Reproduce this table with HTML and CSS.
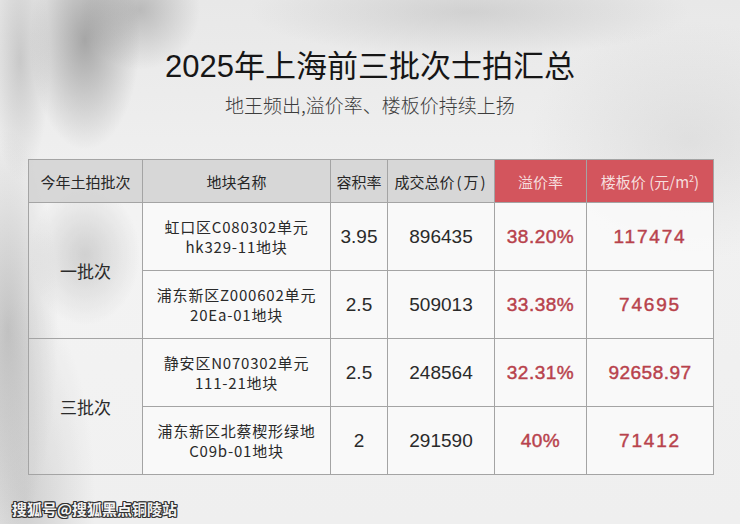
FILE: index.html
```html
<!DOCTYPE html>
<html lang="zh-CN">
<head>
<meta charset="utf-8">
<title>2025年上海前三批次土拍汇总</title>
<link rel="stylesheet" href="styles.css">
</head>
<body>
<div class="page">
  <h1 class="title">2025年上海前三批次士拍汇总</h1>
  <p class="subtitle">地王频出,溢价率、楼板价持续上扬</p>
  <table class="grid">
    <colgroup>
      <col class="c1"><col class="c2"><col class="c3"><col class="c4"><col class="c5"><col class="c6">
    </colgroup>
    <thead>
      <tr class="head">
        <th>今年土拍批次</th>
        <th>地块名称</th>
        <th>容积率</th>
        <th>成交总价<span class="paren">(</span>万<span class="paren">)</span></th>
        <th class="hot">溢价率</th>
        <th class="hot">楼板价 (元/m<sup>2</sup>)</th>
      </tr>
    </thead>
    <tbody>
      <tr>
        <td class="batch" rowspan="2">一批次</td>
        <td class="name">虹口区C080302单元<br>hk329-11地块</td>
        <td class="num">3.95</td>
        <td class="num">896435</td>
        <td class="red">38.20%</td>
        <td class="red wide">117474</td>
      </tr>
      <tr>
        <td class="name">浦东新区Z000602单元<br>20Ea-01地块</td>
        <td class="num">2.5</td>
        <td class="num">509013</td>
        <td class="red">33.38%</td>
        <td class="red wide">74695</td>
      </tr>
      <tr>
        <td class="batch" rowspan="2">三批次</td>
        <td class="name">静安区N070302单元<br>111-21地块</td>
        <td class="num">2.5</td>
        <td class="num">248564</td>
        <td class="red">32.31%</td>
        <td class="red">92658.97</td>
      </tr>
      <tr>
        <td class="name">浦东新区北蔡楔形绿地<br>C09b-01地块</td>
        <td class="num">2</td>
        <td class="num">291590</td>
        <td class="red">40%</td>
        <td class="red wide">71412</td>
      </tr>
    </tbody>
  </table>
  <div class="mark">搜狐号@搜狐黑点铜陵站</div>
</div>
</body>
</html>
```
FILE: styles.css
```css
html, body {
  margin: 0;
  padding: 0;
}
body {
  width: 740px;
  height: 524px;
  overflow: hidden;
  font-family: "Liberation Sans", "Noto Sans CJK SC", sans-serif;
  color: #222;
}
.page {
  width: 740px;
  height: 524px;
  overflow: hidden;
  background:
    radial-gradient(ellipse 55px 110px at 85px 40px, rgba(110,110,110,0.55), rgba(110,110,110,0) 100%),
    radial-gradient(ellipse 60px 60px at 140px 10px, rgba(130,130,130,0.45), rgba(130,130,130,0) 100%),
    radial-gradient(ellipse 30px 120px at 20px 60px, rgba(150,150,150,0.4), rgba(150,150,150,0) 100%),
    radial-gradient(ellipse 50px 200px at 8px 330px, rgba(150,150,150,0.5), rgba(150,150,150,0) 100%),
    radial-gradient(ellipse 55px 70px at 85px 255px, rgba(140,140,140,0.4), rgba(140,140,140,0) 100%),
    radial-gradient(ellipse 220px 45px at 470px 12px, rgba(165,165,165,0.35), rgba(165,165,165,0) 100%),
    radial-gradient(ellipse 160px 120px at 690px 140px, rgba(190,190,190,0.3), rgba(190,190,190,0) 100%),
    radial-gradient(ellipse 70px 200px at 25px 500px, rgba(160,160,160,0.4), rgba(160,160,160,0) 100%),
    linear-gradient(180deg, #e8e8e8 0%, #f1f1f1 40%, #efefef 100%);
}
.title {
  margin: 0;
  padding-top: 47px;
  font-family: "Liberation Sans", "Noto Sans CJK SC", sans-serif;
  font-weight: 400;
  font-size: 31px;
  line-height: 40px;
  text-align: center;
  color: #161616;
}
.subtitle {
  margin: 5px 0 0;
  font-family: "Noto Sans CJK SC", sans-serif;
  font-weight: 300;
  font-size: 19px;
  line-height: 26px;
  text-align: center;
  color: #3c3c3c;
}
.grid {
  margin: 41px 0 0 28px;
  width: 685px;
  border-collapse: collapse;
  table-layout: fixed;
}
.c1 { width: 114px; }
.c2 { width: 188px; }
.c3 { width: 57px; }
.c4 { width: 107px; }
.c5 { width: 92px; }
.c6 { width: 127px; }
.grid th, .grid td {
  border: 1px solid #a4a4a4;
  padding: 0;
  text-align: center;
  vertical-align: middle;
}
.head {
  height: 43px;
}
.head th {
  background: rgba(210,210,210,0.85);
  font-family: "Noto Sans CJK SC", sans-serif;
  font-weight: 400;
  font-size: 15px;
  color: #262626;
}
.paren {
  margin: 0 2px;
}
.head th.hot {
  background: #d3555d;
  color: #f6dede;
}
.head sup {
  font-size: 9px;
  line-height: 0;
}
.grid tbody tr {
  height: 68px;
}
.grid td {
  background: rgba(252,252,252,0.72);
}
.grid td.batch {
  background: rgba(255,255,255,0.15);
  font-family: "Noto Sans CJK SC", sans-serif;
  font-size: 17px;
  color: #2a2a2a;
}
.name {
  font-family: "Noto Sans CJK SC", sans-serif;
  font-size: 15px;
  line-height: 20px;
  letter-spacing: 0.8px;
  color: #2a2a2a;
}
.num {
  font-size: 19px;
  color: #2a2a2a;
}
.red {
  font-size: 19px;
  font-weight: 400;
  -webkit-text-stroke: 0.45px #b8424c;
  color: #b8424c;
  letter-spacing: 0.5px;
}
.red.wide {
  letter-spacing: 1.8px;
}
.mark {
  margin-top: 23px;
  padding-left: 12px;
  font-family: "Noto Sans CJK SC", sans-serif;
  font-size: 15px;
  font-weight: 700;
  line-height: 22px;
  color: #f4f4f4;
  text-shadow:
    1px 0 0 #333, -1px 0 0 #333, 0 1px 0 #333, 0 -1px 0 #333,
    1px 1px 0 #333, -1px -1px 0 #333, 1px -1px 0 #333, -1px 1px 0 #333;
}
```
